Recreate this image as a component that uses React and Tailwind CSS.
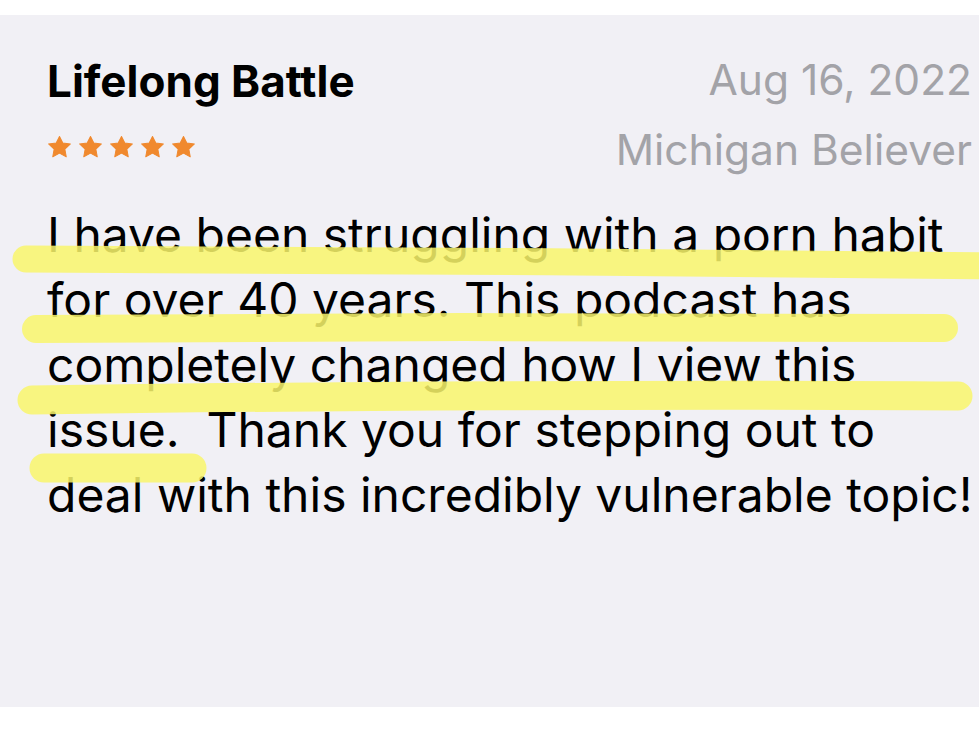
const LINES = [
  "I have been struggling with a porn habit",
  "for over 40 years. This podcast has",
  "completely changed how I view this",
  "issue.  Thank you for stepping out to",
  "deal with this incredibly vulnerable topic!",
];

// highlighter strokes, in coordinates of the review body
const STROKES = [
  { d: "M 26 57 C 300 56, 700 62, 995 64", w: 27 },
  { d: "M 36 127 C 300 125, 700 124, 944 126", w: 28 },
  { d: "M 32 198 C 300 194, 700 192, 958 194", w: 29 },
  { d: "M 44 266 L 192 266", w: 29 },
];

function Star() {
  return (
    <svg viewBox="0 0 24 24" className="h-[25px] w-[25px]" fill="#f0892e">
      <path
        d="M12 1.5L15.17 7.63 22.46 8.6 17.14 13.67 18.47 20.9 12 17.4 5.53 20.9 6.86 13.67 1.54 8.6 8.83 7.63Z"
        stroke="#f0892e"
        strokeWidth="1"
        strokeLinejoin="round"
      />
    </svg>
  );
}

export default function App() {
  return (
    <div
      className="min-h-screen overflow-hidden bg-white pt-[15px]"
      style={{ fontFamily: "Inter, 'Noto Sans', sans-serif" }}
    >
      <div className="h-[692px] bg-[#f1f0f5] pl-[47px] pr-[7px] pt-[30px]">
        <div className="flex items-start justify-between">
          <div className="pt-[8px]">
            <h1 className="text-[44px] font-bold leading-[56px] text-black">
              Lifelong Battle
            </h1>
            <div className="mt-[26px] flex gap-[6px]">
              <Star />
              <Star />
              <Star />
              <Star />
              <Star />
            </div>
          </div>
          <div className="text-right text-[42.5px] leading-[70px] text-[#a3a3a8]">
            <div>Aug 16, 2022</div>
            <div>Michigan Believer</div>
          </div>
        </div>

        <div className="relative -ml-[47px] mt-[17px] pl-[47px]">
          <div className="whitespace-pre text-[48px] leading-[65px] text-black">
            {LINES.map((l) => (
              <div key={l}>{l}</div>
            ))}
          </div>
          <svg
            className="pointer-events-none absolute inset-0 h-full w-[1000px] opacity-[0.85]"
            fill="none"
          >
            {STROKES.map((s) => (
              <path
                key={s.d}
                d={s.d}
                stroke="#faf66c"
                strokeWidth={s.w}
                strokeLinecap="round"
              />
            ))}
          </svg>
        </div>
      </div>
    </div>
  );
}
